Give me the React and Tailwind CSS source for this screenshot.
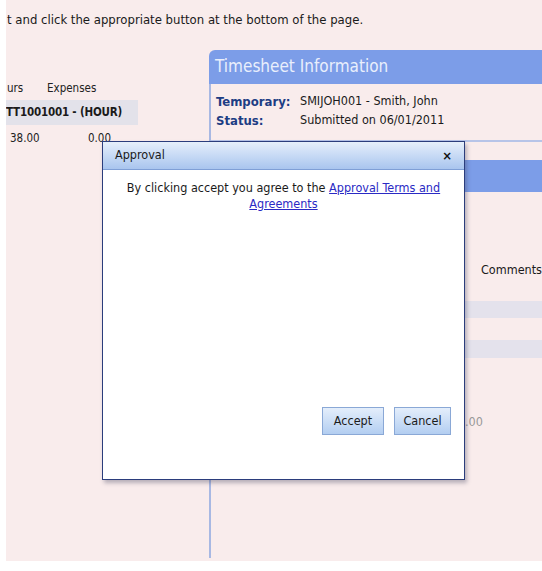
import React from "react";

const FONT = "font-['DejaVu_Sans_Condensed','DejaVu_Sans',sans-serif]";

const Dialog = () => {
    return (
        <div className="absolute left-[96px] top-[141px] w-[363px] h-[339px] flex flex-col bg-white border border-[#2b3d7c] shadow-[2px_3px_4px_rgba(60,60,90,0.35)]">
            <div className="h-[28px] flex items-center justify-between px-[12px] bg-gradient-to-b from-[#e6effb] to-[#a9c5ee] border-b border-[#7f9fd6]">
                <span className="text-[12.5px] text-[#1a1a1a]">Approval</span>
                <span className="text-[13px] font-bold text-[#111] leading-none">×</span>
            </div>
            <div className="flex-1 pt-[10px] px-[14px] text-center text-[12.5px] leading-[16px] text-[#1a1a1a]">
                By clicking accept you agree to the{" "}
                <a href="#" className="text-[#2a2ac4] underline">Approval Terms and Agreements</a>
            </div>
            <div className="flex justify-end gap-[10px] pr-[13px] pb-[44px]">
                <button className="w-[62px] h-[28px] text-[12.5px] text-[#1a1a1a] bg-gradient-to-b from-[#e4eefb] to-[#b3cef1] border border-[#8aa8d6]">
                    Accept
                </button>
                <button className="w-[57px] h-[28px] text-[12.5px] text-[#1a1a1a] bg-gradient-to-b from-[#e4eefb] to-[#b3cef1] border border-[#8aa8d6]">
                    Cancel
                </button>
            </div>
        </div>
    );
}

const App = () => {
    return (
        <div className="w-[542px] h-[571px] bg-white pl-[6px]">
            <div className={`relative h-[561px] bg-[#f9ecec] overflow-hidden text-[12px] text-[#222] ${FONT}`}>
                <p className="pl-[1px] pt-[12px] h-[28px] text-[13px] leading-[16px] text-[#1a1a1a]">
                    t and click the appropriate button at the bottom of the page.
                </p>

                <div className="flex mt-[22px]">
                    {/* left table, scrolled */}
                    <div className="w-[203px] shrink-0 pt-[30px]">
                        <div className="flex h-[18px] items-center text-[11.5px] text-[#222]">
                            <span className="pl-[1px] w-[41px]">urs</span>
                            <span>Expenses</span>
                        </div>
                        <div className="mt-[2px] w-[132px] h-[25px] flex items-center bg-[#e3e2ea] font-bold text-[11.5px] tracking-[-0.2px] text-[#1a1a1a] whitespace-nowrap">
                            <span className="w-[74px] overflow-hidden">TT1001001 -</span>
                            <span>(HOUR)</span>
                        </div>
                        <div className="mt-[5px] flex h-[18px] items-center text-[11.5px] text-[#222]">
                            <span className="pl-[4px] w-[82px]">38.00</span>
                            <span>0.00</span>
                        </div>
                    </div>

                    {/* timesheet panel */}
                    <div className="flex-1 min-w-[360px]">
                        <div className="h-[34px] flex items-center pl-[6px] rounded-tl-[6px] bg-[#7c9de8] text-[17px] text-[#e9effc]">
                            Timesheet Information
                        </div>
                        <div className="h-[474px] border-l-2 border-[#a8b8e3]">
                            <div className="pt-[8px] pl-[5px] h-[58px] border-b-2 border-[#b7c4e8]">
                                <div className="flex h-[19px] items-center">
                                    <span className="w-[84px] font-bold text-[13px] text-[#1d3d84]">Temporary:</span>
                                    <span className="text-[12.5px] text-[#1a1a1a]">SMIJOH001 - Smith, John</span>
                                </div>
                                <div className="flex h-[19px] items-center">
                                    <span className="w-[84px] font-bold text-[13px] text-[#1d3d84]">Status:</span>
                                    <span className="text-[12.5px] text-[#1a1a1a]">Submitted on 06/01/2011</span>
                                </div>
                            </div>
                            <div className="mt-[18px] h-[32px] bg-[#7c9de8]"></div>
                            <div className="mt-[69px] h-[18px] flex items-center pl-[270px] text-[12.5px] text-[#1a1a1a]">
                                Comments
                            </div>
                            <div className="mt-[22px] h-[17px] bg-[#e4e2ec]"></div>
                            <div className="mt-[22px] h-[18px] bg-[#e4e2ec]"></div>
                            <div className="mt-[55px] h-[18px] flex items-center pl-[254px] text-[12.5px] text-[#9a9a9a]">
                                .00
                            </div>
                        </div>
                    </div>
                </div>

                <Dialog/>
            </div>
        </div>
    );
}

export default App;
